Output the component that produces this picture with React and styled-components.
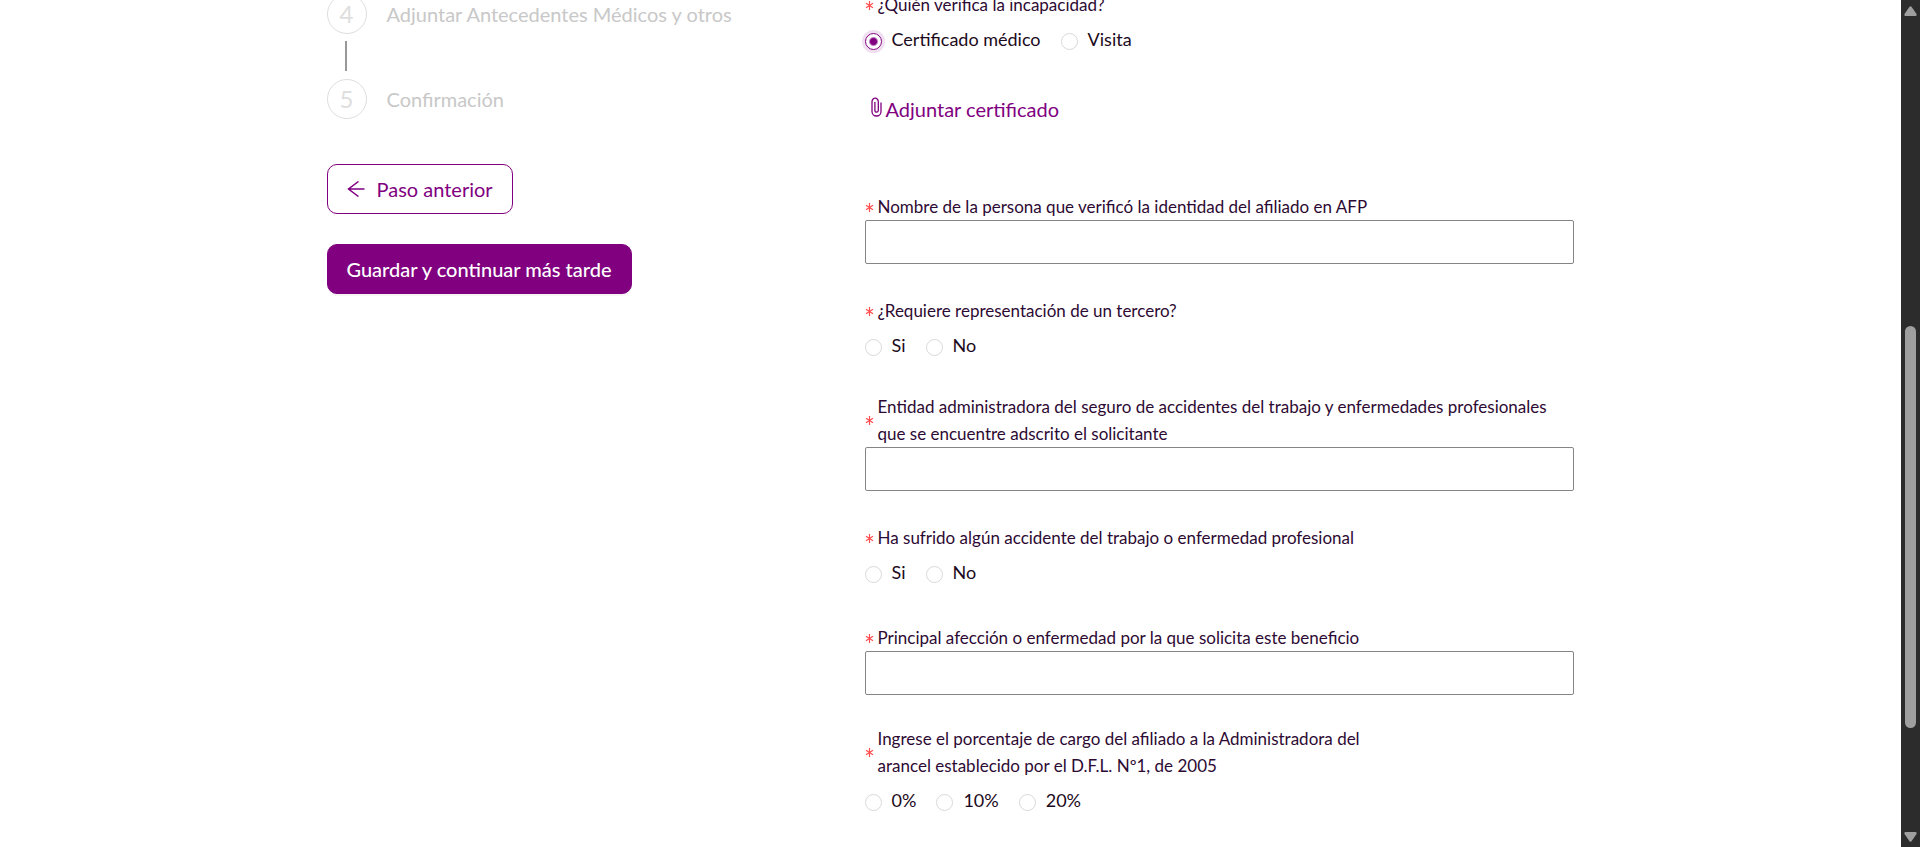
import React from "react";
import styled, { createGlobalStyle } from "styled-components";

const purple = "#800080";
const ink = "#2d0a33";

const GlobalStyle = createGlobalStyle`
  *, *::before, *::after { box-sizing: border-box; }
  html, body { margin: 0; background: #fff; overflow: hidden; }
  body, button, input { font-family: Lato, "Open Sans", sans-serif; }
`;

const Screen = styled.div`
  display: flex;
  height: 100vh;
  overflow: hidden;
`;

const Content = styled.main`
  flex: 1;
  min-width: 0;
  display: flex;
  justify-content: center;
`;

const Columns = styled.div`
  width: 100%;
  max-width: 1248px;
  display: grid;
  grid-template-columns: 538px minmax(0, 1fr);
  align-items: start;
`;

const Sidebar = styled.aside`
  display: flex;
  flex-direction: column;
  align-items: flex-start;
  margin-top: -6px;
`;

const Steps = styled.ol`
  list-style: none;
  margin: 0 0 45px;
  padding: 0;
`;

const Step = styled.li`
  display: flex;
  align-items: center;
  gap: 20px;
  font-size: 20px;
  line-height: 30px;
  color: #c8c8c8;
`;

const StepNumber = styled.span`
  width: 40px;
  height: 40px;
  border: 1px solid #dedede;
  border-radius: 50%;
  display: flex;
  align-items: center;
  justify-content: center;
  font-size: 24px;
  color: #dedede;
`;

const StepLine = styled.li`
  width: 2px;
  height: 30px;
  margin: 7px 0 8px 18px;
  background: #999;
`;

const Button = styled.button`
  height: 50px;
  display: inline-flex;
  align-items: center;
  gap: 12px;
  padding: 0 19px 1px;
  margin-bottom: 30px;
  border: 1px solid ${purple};
  border-radius: 10px;
  font-size: 20px;
  line-height: 30px;
  cursor: pointer;
  background: ${(p) => (p.$filled ? purple : "#fff")};
  color: ${(p) => (p.$filled ? "#fff" : purple)};
  font-weight: ${(p) => (p.$filled ? 500 : 400)};
  box-shadow: ${(p) => (p.$filled ? "0 2px 0 rgba(0, 0, 0, 0.04)" : "none")};
`;

const Form = styled.form`
  display: flex;
  flex-direction: column;
  align-items: stretch;
  width: 100%;
  max-width: 709px;
  margin-top: -9px;
`;

const Field = styled.div`
  display: flex;
  flex-direction: column;
  min-width: 0;
  margin: 0 0 ${(p) => p.$after}px;
`;

const Group = styled(Field)`
  gap: 8px;
`;

const Label = styled.label`
  display: flex;
  align-items: center;
  gap: 4px;
  max-width: ${(p) => (p.$narrow ? "530px" : "none")};
  font-size: 17px;
  line-height: 27px;
  color: ${ink};
`;

const Star = styled.svg`
  flex: none;
  width: 9px;
  height: 9px;
  margin-top: 1px;
  stroke: #ff4d4f;
  stroke-width: 1.2;
`;

const TextInput = styled.input`
  width: 100%;
  height: 44px;
  padding: 0 11px;
  border: 1px solid #858585;
  border-radius: 2px;
  background: #fff;
  color: ${ink};
  font-size: 18px;
`;

const Options = styled.div`
  display: flex;
  gap: 20px;
`;

const Option = styled.label`
  display: flex;
  align-items: center;
  gap: 10px;
  font-size: 18px;
  line-height: 27px;
  color: #1c0a20;
`;

const Radio = styled.input`
  appearance: none;
  width: 17px;
  height: 17px;
  margin: 3px 0 0;
  border: 1px solid #d9d9d9;
  border-radius: 50%;
  background: #fff;
  &:checked {
    border-color: ${purple};
    background: radial-gradient(circle, ${purple} 3px, #fff 5px);
    box-shadow: 0 0 0 3px #f0dff0;
  }
`;

const AttachLink = styled.a`
  align-self: flex-start;
  display: flex;
  align-items: flex-start;
  gap: 4px;
  margin: 0 0 69px 6px;
  font-size: 20px;
  line-height: 30px;
  color: ${purple};
  text-decoration: none;
  svg {
    margin-top: 3px;
  }
`;

const Scrollbar = styled.div`
  flex: none;
  width: 19px;
  display: flex;
  flex-direction: column;
  align-items: center;
  justify-content: space-between;
  padding: 6px 0 5px;
  background: #2c2c2c;
`;

const Track = styled.div`
  flex: 1;
  width: 11px;
  display: flex;
  flex-direction: column;
`;

const Spacer = styled.div`
  flex: ${(p) => p.$grow} 0 0;
`;

const Thumb = styled.div`
  flex: 402 0 0;
  border-radius: 6px;
  background: #9f9f9f;
`;

function RequiredMark() {
  return (
    <Star viewBox="0 0 9 9" fill="none" aria-hidden="true">
      <path d="M4.5 0v9M1 2.2l7 4.6M8 2.2L1 6.8" />
    </Star>
  );
}

function TextField({ id, label, after }) {
  return (
    <Field $after={after}>
      <Label htmlFor={id}><RequiredMark /><span>{label}</span></Label>
      <TextInput id={id} type="text" required />
    </Field>
  );
}

function RadioField({ id, label, options, selected, after, narrow }) {
  return (
    <Group role="radiogroup" aria-labelledby={id} $after={after}>
      <Label as="div" id={id} $narrow={narrow}><RequiredMark /><span>{label}</span></Label>
      <Options>
        {options.map((o) => (
          <Option key={o}>
            <Radio type="radio" name={id} value={o} defaultChecked={o === selected} />
            {o}
          </Option>
        ))}
      </Options>
    </Group>
  );
}

export default function App() {
  return (
    <Screen>
      <GlobalStyle />
      <Content>
        <Columns>
          <Sidebar>
            <Steps>
              <Step><StepNumber>4</StepNumber>Adjuntar Antecedentes Médicos y otros</Step>
              <StepLine aria-hidden="true" />
              <Step><StepNumber>5</StepNumber>Confirmación</Step>
            </Steps>
            <Button type="button">
              <svg width="18" height="16" viewBox="0 0 18 16" fill="none" stroke="currentColor" strokeWidth="1.5" aria-hidden="true">
                <path d="M17.500 8H1.500M11.500 0.500L1.500 8l10 7.500" />
              </svg>
              Paso anterior
            </Button>
            <Button type="button" $filled>Guardar y continuar más tarde</Button>
          </Sidebar>
          <Form>
            <RadioField id="verifica" label="¿Quién verifica la incapacidad?" options={["Certificado médico", "Visita"]} selected="Certificado médico" after={41} />
            <AttachLink href="#adjuntar">
              <svg width="11" height="20" viewBox="0 0 11 20" fill="none" stroke="currentColor" strokeWidth="1.3" aria-hidden="true">
                <path d="M7.300 5v8.500a1.700 1.700 0 0 1-3.400 0V5M10 5.500V14.500a4.500 4.500 0 0 1-9 0V4.800A3.150 3.600 0 0 1 7.300 4.800V6" />
              </svg>
              Adjuntar certificado
            </AttachLink>
            <TextField id="nombre" label="Nombre de la persona que verificó la identidad del afiliado en AFP" after={33} />
            <RadioField id="tercero" label="¿Requiere representación de un tercero?" options={["Si", "No"]} after={34} />
            <TextField id="entidad" label="Entidad administradora del seguro de accidentes del trabajo y enfermedades profesionales que se encuentre adscrito el solicitante" after={33} />
            <RadioField id="accidente" label="Ha sufrido algún accidente del trabajo o enfermedad profesional" options={["Si", "No"]} after={38} />
            <TextField id="afeccion" label="Principal afección o enfermedad por la que solicita este beneficio" after={30} />
            <RadioField id="porcentaje" label="Ingrese el porcentaje de cargo del afiliado a la Administradora del arancel establecido por el D.F.L. Nº1, de 2005" options={["0%", "10%", "20%"]} after={33} narrow />
          </Form>
        </Columns>
      </Content>
      <Scrollbar aria-hidden="true">
        <svg width="13" height="10" viewBox="0 0 13 10" fill="#9f9f9f"><path d="M5.500 .8Q6.500-.4 7.500.8L12.500 8Q13 10 11.500 10H1.500Q0 10 .5 8Z" /></svg>
        <Track>
          <Spacer $grow={310} />
          <Thumb />
          <Spacer $grow={104} />
        </Track>
        <svg width="13" height="10" viewBox="0 0 13 10" fill="#9f9f9f"><path d="M5.500 9.200Q6.500 10.400 7.500 9.200L12.500 2Q13 0 11.500 0H1.500Q0 0 .5 2Z" /></svg>
      </Scrollbar>
    </Screen>
  );
}
